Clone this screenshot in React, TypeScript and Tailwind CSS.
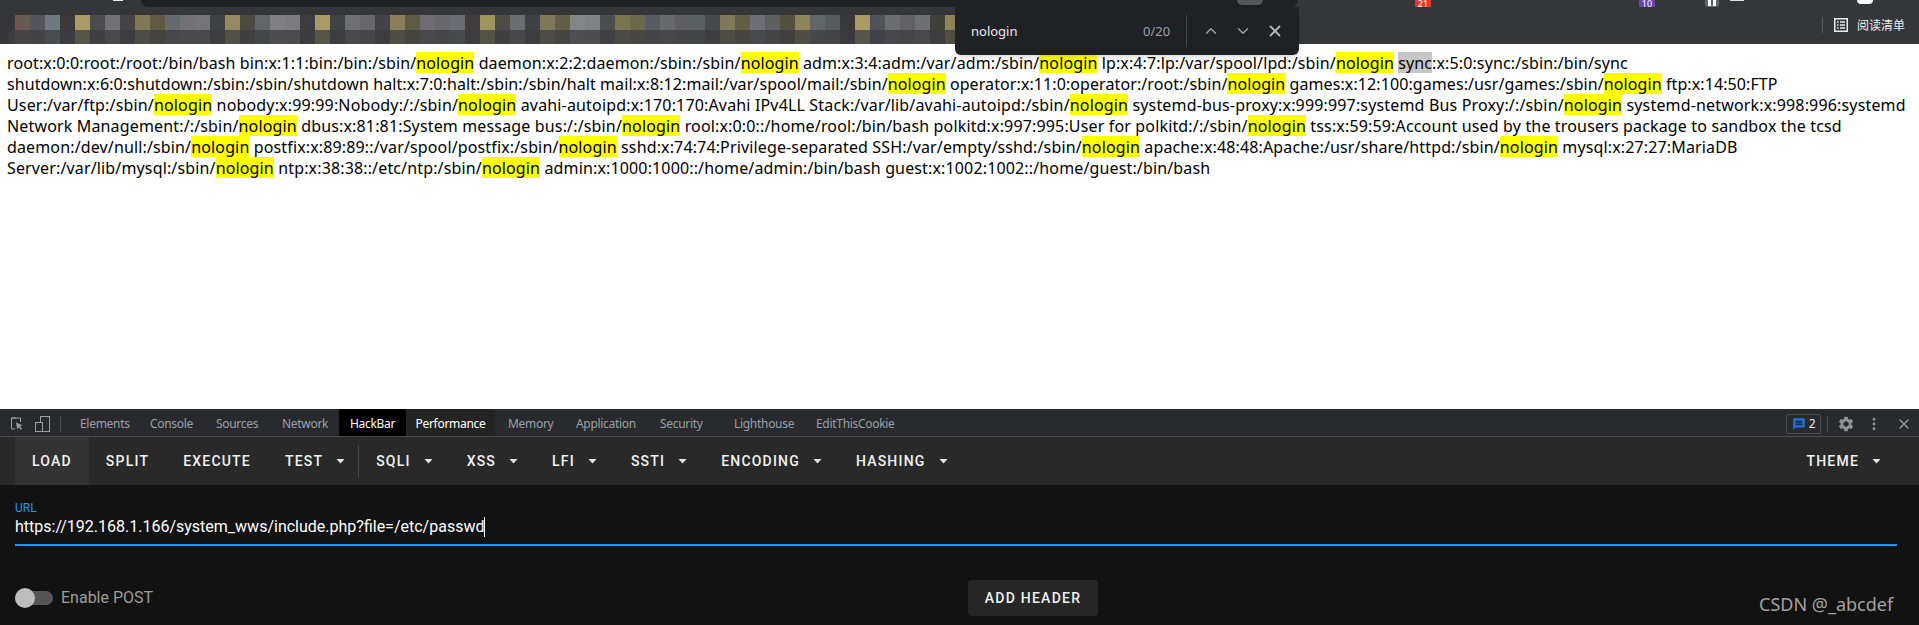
import React from 'react';
import { ChevronUp, ChevronDown, X, EllipsisVertical } from 'lucide-react';
import { MdSettings, MdMessage } from 'react-icons/md';

const blurBlocks = [
  'bg-[#6a5a4e]', 'bg-[#52555a]', 'bg-[#6f7a7e]', 'bg-[#3c383c]', 'bg-[#a89a62]', 'bg-[#4a4c4e]', 'bg-[#727276]',
  'bg-[#454347]', 'bg-[#807a58]', 'bg-[#605a44]', 'bg-[#666b70]', 'bg-[#727276]', 'bg-[#747479]', 'bg-[#404144]',
  'bg-[#948a60]', 'bg-[#4c4a40]', 'bg-[#60666a]', 'bg-[#808084]', 'bg-[#7c7c80]', 'bg-[#3c3d40]', 'bg-[#a89a62]',
  'bg-[#404346]', 'bg-[#6f7073]', 'bg-[#66666c]', 'bg-[#424247]', 'bg-[#8a8058]', 'bg-[#5e5a44]', 'bg-[#706c74]',
  'bg-[#68696c]', 'bg-[#686e74]', 'bg-[#403c3e]', 'bg-[#a0945f]', 'bg-[#4c4c44]', 'bg-[#6c6d70]', 'bg-[#404144]',
  'bg-[#807a58]', 'bg-[#645e48]', 'bg-[#848686]', 'bg-[#808184]', 'bg-[#4b4e4e]', 'bg-[#7a7452]', 'bg-[#6c684c]',
  'bg-[#5a5a62]', 'bg-[#666a6c]', 'bg-[#5e5e60]', 'bg-[#586064]', 'bg-[#46484c]', 'bg-[#807a58]', 'bg-[#645e48]',
  'bg-[#6a7076]', 'bg-[#5e605e]', 'bg-[#54503e]', 'bg-[#8e845c]', 'bg-[#60666a]', 'bg-[#565c5e]', 'bg-[#38393c]',
  'bg-[#a89a62]', 'bg-[#50525a]', 'bg-[#6c6d70]', 'bg-[#626266]', 'bg-[#6c7072]', 'bg-[#403f3a]', 'bg-[#8e8458]',
];

const passwdLines = [
  { text: 'root:x:0:0:root:/root:/bin/bash bin:x:1:1:bin:/bin:/sbin/nologin daemon:x:2:2:daemon:/sbin:/sbin/nologin adm:x:3:4:adm:/var/adm:/sbin/nologin lp:x:4:7:lp:/var/spool/lpd:/sbin/nologin sync:x:5:0:sync:/sbin:/bin/sync', cls: 'tracking-[0.12px]' },
  { text: 'shutdown:x:6:0:shutdown:/sbin:/sbin/shutdown halt:x:7:0:halt:/sbin:/sbin/halt mail:x:8:12:mail:/var/spool/mail:/sbin/nologin operator:x:11:0:operator:/root:/sbin/nologin games:x:12:100:games:/usr/games:/sbin/nologin ftp:x:14:50:FTP', cls: 'tracking-[0.09px]' },
  { text: 'User:/var/ftp:/sbin/nologin nobody:x:99:99:Nobody:/:/sbin/nologin avahi-autoipd:x:170:170:Avahi IPv4LL Stack:/var/lib/avahi-autoipd:/sbin/nologin systemd-bus-proxy:x:999:997:systemd Bus Proxy:/:/sbin/nologin systemd-network:x:998:996:systemd', cls: 'tracking-[0.16px]' },
  { text: 'Network Management:/:/sbin/nologin dbus:x:81:81:System message bus:/:/sbin/nologin rool:x:0:0::/home/rool:/bin/bash polkitd:x:997:995:User for polkitd:/:/sbin/nologin tss:x:59:59:Account used by the trousers package to sandbox the tcsd', cls: 'tracking-[0.155px]' },
  { text: 'daemon:/dev/null:/sbin/nologin postfix:x:89:89::/var/spool/postfix:/sbin/nologin sshd:x:74:74:Privilege-separated SSH:/var/empty/sshd:/sbin/nologin apache:x:48:48:Apache:/usr/share/httpd:/sbin/nologin mysql:x:27:27:MariaDB', cls: 'tracking-[0.14px]' },
  { text: 'Server:/var/lib/mysql:/sbin/nologin ntp:x:38:38::/etc/ntp:/sbin/nologin admin:x:1000:1000::/home/admin:/bin/bash guest:x:1002:1002::/home/guest:/bin/bash', cls: 'tracking-[0.145px]' },
];

const tabs = [
  { label: 'Elements', cls: 'w-[70px]' },
  { label: 'Console', cls: 'w-[66px]' },
  { label: 'Sources', cls: 'w-[66px]' },
  { label: 'Network', cls: 'w-[57px]' },
];

const rightTabs = [
  { label: 'Memory', cls: 'w-[68px]' },
  { label: 'Application', cls: 'w-[84px]' },
  { label: 'Security', cls: 'w-[74px]' },
  { label: 'Lighthouse', cls: 'w-[82px]' },
  { label: 'EditThisCookie', cls: 'w-[100px]' },
];

const Caret = () => (
  <svg width="9" height="5" viewBox="0 0 9 5" className="ml-[13px] text-[#e4e4e4]">
    <path d="M0.5 0 H8.5 L4.5 4.5 Z" fill="currentColor" />
  </svg>
);

const MenuButton = ({ label, caret, active }: { label: string; caret?: boolean; active?: boolean }) => (
  <div className={`flex h-full items-center px-[17px] font-medium text-[14px] tracking-[1.2px] text-[#f2f2f2] ${active ? 'bg-[#333333]' : ''}`}>
    {label}
    {caret && <Caret />}
  </div>
);

// highlights every nologin, plus the grey selected "sync" of the first line
const PasswdLine = ({ text, cls, index }: { text: string; cls: string; index: number }) => {
  const parts = text.split('nologin');
  return (
    <div className={`h-[21px] whitespace-pre ${cls}`}>
      {parts.map((part, i) => {
        const syncAt = index === 0 ? part.indexOf(' sync:x') : -1;
        return (
          <React.Fragment key={i}>
            {syncAt >= 0 ? (
              <>
                {part.slice(0, syncAt + 1)}
                <span className="inline-block bg-[#c6c6c6] pt-[2px] leading-[19px]">sync</span>
                {part.slice(syncAt + 5)}
              </>
            ) : (
              part
            )}
            {i < parts.length - 1 && <span className="inline-block bg-[#ffff00] pt-[2px] leading-[19px]">nologin</span>}
          </React.Fragment>
        );
      })}
    </div>
  );
};

const App = () => {
  return (
    <div className="relative flex h-[625px] w-[1919px] flex-col overflow-hidden bg-white font-['Noto_Sans',sans-serif]">
      {/* Browser chrome */}
      <div className="h-[44px] shrink-0 bg-[#35363a]">
        <div className="flex h-[7px]">
          <div className="ml-[113px] h-[1px] w-[10px] bg-[#e8e8e8]"></div>
          <div className="ml-[18px] flex h-[7px] w-[1157px] justify-end overflow-hidden rounded-b-[10px] bg-[#202124]">
            <div className="mr-[35px] h-[5px] w-[26px] rounded-b-full bg-[#55565a]"></div>
          </div>
          <div className="ml-[117px] h-[7px] w-[16px] bg-[#e5392c] text-center text-[9px] leading-[7px] text-white">21</div>
          <div className="ml-[208px] h-[7px] w-[16px] bg-[#6c3fb5] text-center text-[9px] leading-[7px] text-white">10</div>
          <div className="ml-[50px] flex h-[7px] w-[14px] justify-center gap-[2px] rounded-b-[2px] bg-[#5f6368]">
            <div className="h-[6px] w-[3px] bg-white"></div>
            <div className="h-[6px] w-[3px] bg-white"></div>
          </div>
          <div className="ml-[11px] h-[1px] w-[14px] bg-[#dcdcdc]"></div>
          <div className="ml-[113px] h-[4px] w-[16px] rounded-b-full bg-white"></div>
        </div>
        <div className="flex h-[37px]">
          <div className="ml-[15px] mt-[8px] flex w-[945px] flex-col">
            <div className="flex h-[15px]">
              {blurBlocks.map((cls, i) => (
                <div key={i} className={`h-full w-[15px] ${cls}`}></div>
              ))}
            </div>
            <div className="-ml-[8px] flex h-[14px] rounded-l-[8px] bg-[#3c3d41] pl-[8px]">
              {blurBlocks.map((cls, i) => (
                <div key={i} className={`h-full w-[15px] shrink-0 opacity-25 ${cls}`}></div>
              ))}
            </div>
          </div>
          <div className="ml-[862px] mt-[10px] flex h-[16px] items-center border-l border-[#5a5b5f] pl-[11px] text-[12px] text-[#e8eaed]">
            <svg width="14" height="14" viewBox="0 0 14 14" className="text-[#e8eaed]">
              <rect x="0.75" y="0.75" width="12.5" height="12.5" fill="none" stroke="currentColor" strokeWidth="1.5" />
              <path d="M3 4h1.5M3 7h1.5M3 10h1.5M6 4h5M6 7h5M6 10h5" stroke="currentColor" strokeWidth="1.3" />
            </svg>
            <span className="ml-[9px] font-['Noto_Sans_CJK_SC',sans-serif]">阅读清单</span>
          </div>
        </div>
      </div>

      {/* Page: /etc/passwd output */}
      <div className="h-[365px] shrink-0 bg-white pl-[7px] pt-[8px] text-[16px] leading-[21px] text-black">
        {passwdLines.map((line, i) => (
          <PasswdLine key={i} text={line.text} cls={line.cls} index={i} />
        ))}
      </div>

      {/* Devtools tab strip */}
      <div className="flex h-[28px] shrink-0 items-center border-b border-[#4a4b4e] bg-[#292a2d] pr-[7px] pt-[2px] text-[12px] tracking-[-0.3px] text-[#9aa0a6]">
        <div className="ml-[9px] flex w-[71px] items-center">
          <svg width="16" height="16" viewBox="0 0 16 16" fill="none" className="text-[#9aa0a6]">
            <path d="M7 2H2.5v11H6" stroke="currentColor" strokeWidth="1" />
            <path d="M2.5 2h9v4" stroke="currentColor" strokeWidth="1" />
            <path d="M7 6.5l6.5 2.7-2.6 1 2.2 2.6-1.2 1-2.2-2.6-1.3 2.2z" fill="currentColor" />
          </svg>
          <svg width="16" height="16" viewBox="0 0 16 16" fill="none" className="ml-[10px] text-[#9aa0a6]">
            <rect x="5.5" y="0.5" width="9" height="15" stroke="currentColor" />
            <rect x="0.5" y="6.5" width="7" height="9" fill="#292a2d" stroke="currentColor" />
          </svg>
          <div className="ml-[9px] h-[16px] w-px bg-[#4a4b4e]"></div>
        </div>
        {tabs.map((t) => (
          <div key={t.label} className={t.cls}>{t.label}</div>
        ))}
        <div className="-mt-[2px] flex h-[27px] w-[67px] items-center justify-center self-start bg-black pt-[2px] text-white">HackBar</div>
        <div className="-mt-[2px] flex h-[27px] w-[89px] items-center justify-center self-start bg-[#242424] pt-[2px] text-white">Performance</div>
        <div className="w-[13px]"></div>
        {rightTabs.map((t) => (
          <div key={t.label} className={t.cls}>{t.label}</div>
        ))}
        <div className="ml-auto flex h-[20px] w-[35px] items-center justify-center gap-[3px] rounded-[2px] border border-[#4a4b4e] text-[#e8eaed]">
          <MdMessage size={14} className="text-[#1a73e8]" />
          <span>2</span>
        </div>
        <div className="ml-[6px] h-[16px] w-px bg-[#4a4b4e]"></div>
        <MdSettings size={18} className="ml-[9px] text-[#8f9398]" />
        <EllipsisVertical size={16} strokeWidth={2.4} className="ml-[11px] text-[#8f9398]" />
        <X size={16} strokeWidth={1.8} className="ml-[14px] text-[#9aa0a6]" />
      </div>

      {/* HackBar menu */}
      <div className="flex h-[48px] shrink-0 items-center bg-[#292929] pl-[15px] pr-[21px] font-['Roboto',sans-serif]">
        <MenuButton label="LOAD" active />
        <MenuButton label="SPLIT" />
        <MenuButton label="EXECUTE" />
        <MenuButton label="TEST" caret />
        <div className="-ml-[4px] h-[32px] w-px bg-[#4a4a4a]"></div>
        <MenuButton label="SQLI" caret />
        <MenuButton label="XSS" caret />
        <MenuButton label="LFI" caret />
        <MenuButton label="SSTI" caret />
        <MenuButton label="ENCODING" caret />
        <MenuButton label="HASHING" caret />
        <div className="ml-auto h-full">
          <MenuButton label="THEME" caret />
        </div>
      </div>

      {/* HackBar body */}
      <div className="flex-1 bg-[#121212] px-[15px] pt-[16px] font-['Roboto',sans-serif]">
        <div className="mr-[7px] h-[45px] border-b-2 border-[#2196f3]">
          <div className="h-[14px] text-[12px] leading-[14px] text-[#2196f3]">URL</div>
          <div className="mt-[2px] flex h-[20px] items-center text-[16px] text-white">
            https://192.168.1.166/system_wws/include.php?file=/etc/passwd
            <div className="h-[20px] w-px bg-white"></div>
          </div>
        </div>
        <div className="mt-[34px] flex h-[36px] items-center">
          <div className="flex w-[953px] items-center">
            <div className="relative h-[14px] w-[38px] rounded-full bg-[#555555]">
              <div className="absolute left-0 top-[-3px] h-[20px] w-[20px] rounded-full bg-[#bdbdbd]"></div>
            </div>
            <span className="ml-[8px] text-[16px] text-[#9e9e9e]">Enable POST</span>
          </div>
          <div className="flex h-[36px] w-[130px] items-center justify-center rounded-[4px] bg-[#272727] text-[14px] font-medium tracking-[1.25px] text-[#f2f2f2]">
            ADD HEADER
          </div>
        </div>
      </div>

      {/* Find in page popup */}
      <div className="absolute left-[955px] top-[7px] flex h-[48px] w-[344px] items-center rounded-b-[6px] bg-[#202124] text-[13px] shadow-md">
        <span className="ml-[16px] mt-[2px] w-[172px] text-[#e8eaed]">nologin</span>
        <span className="mt-[2px] w-[43px] text-[#9aa0a6]">0/20</span>
        <div className="h-[32px] w-px bg-[#4a4b4e]"></div>
        <ChevronUp size={18} className="ml-[15px] text-[#9aa0a6]" />
        <ChevronDown size={18} className="ml-[14px] text-[#9aa0a6]" />
        <X size={18} strokeWidth={2.4} className="ml-[14px] text-[#b4b7bb]" />
      </div>

      {/* Watermark */}
      <div className="absolute left-[1759px] top-[592px] text-[18px] leading-[24px] text-[#a3a3a3]">CSDN @_abcdef</div>
    </div>
  );
};

export default App;
